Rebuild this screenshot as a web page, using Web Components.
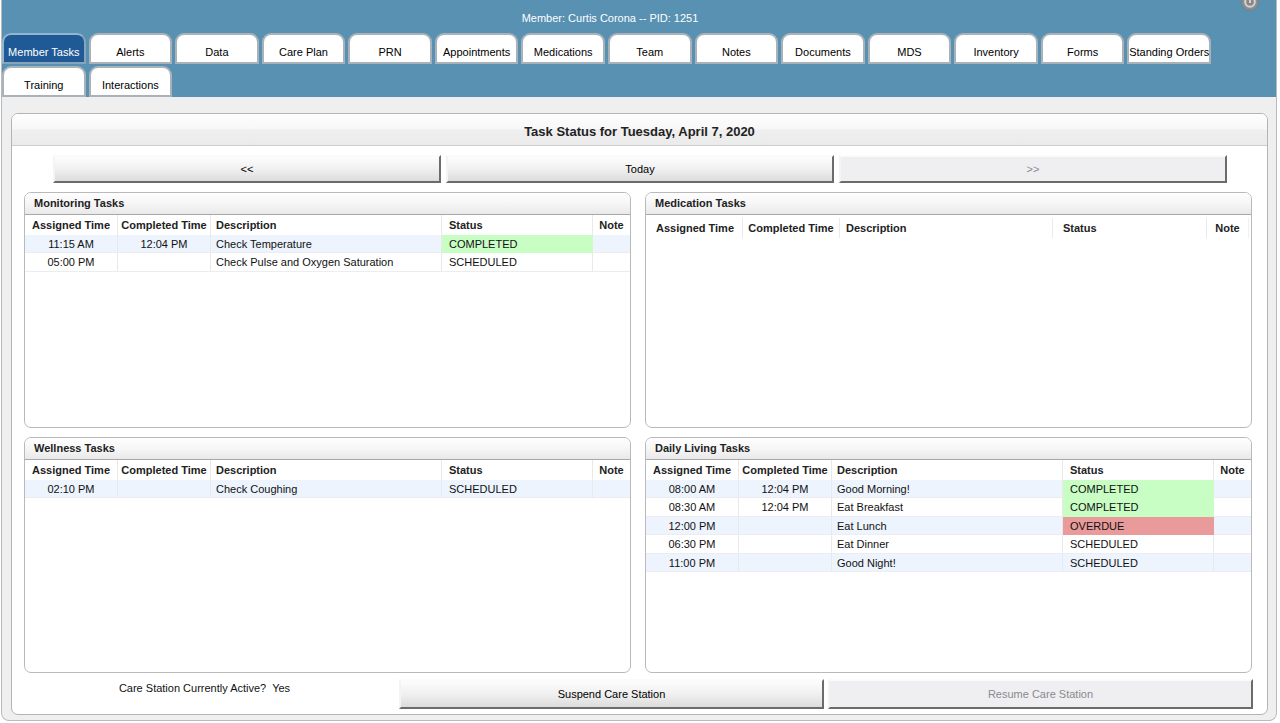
<!DOCTYPE html>
<html lang="en">
<head>
<meta charset="utf-8">
<title>Member Tasks</title>
<style>
  html { background: #fff; }
  body { margin: 0; font: 11px/14px "Liberation Sans", Arial, sans-serif; color: #111; }
</style>
</head>
<body>
<care-page></care-page>

<script>
const define = (name, html, setup) => {
  const template = document.createElement('template');
  template.innerHTML = html;
  customElements.define(name, class extends HTMLElement {
    connectedCallback() {
      if (this.shadowRoot) return;
      const root = this.attachShadow({ mode: 'open' });
      root.append(template.content.cloneNode(true));
      if (setup) setup(this, root);
    }
  });
};

/* A navigation tab */
define('nav-tab', `
  <style>
    :host { display: block; min-width: 0; }
    a { display: flex; box-sizing: border-box; height: 31px; padding-top: 6px; align-items: center; justify-content: center;
        white-space: nowrap; color: #000; background: #fff; text-decoration: none;
        border: 2px solid #a9b2b8; border-radius: 9px 9px 0 0; }
    :host([selected]) a { background: #1f5a96; color: #fff; border-color: #92b6cd #86a5ba #86a5ba #92b6cd; }
  </style>
  <a href="#"><slot></slot></a>
`, (el, root) => {
  if (el.hasAttribute('selected')) root.querySelector('a').setAttribute('aria-current', 'page');
});

/* Raised push button */
define('push-button', `
  <style>
    :host { display: block; min-width: 0; }
    button { display: block; box-sizing: border-box; width: 100%; height: var(--button-height, 28px); margin: 0; padding: 0;
        font: inherit; color: #000; border: 2px solid; border-color: #fbfbfb #6b6b6b #6b6b6b #f4f4f4;
        background: linear-gradient(#fdfdfd, #f0f0f0 50%, #dcdcdc); }
    button:disabled { color: #8a8a8d; background: #efeff2; border-color: #fbfbfb #6b6b6b #6b6b6b #f4f4f4; }
  </style>
  <button type="button"><slot></slot></button>
`, (el, root) => {
  root.querySelector('button').disabled = el.hasAttribute('disabled');
});

/* Panel with a heading and a task table; rows come from the "rows" attribute */
define('task-panel', `
  <style>
    :host { display: flex; flex-direction: column; box-sizing: border-box; min-width: 0;
        border: 1px solid #b9b9b9; border-radius: 7px; overflow: hidden; background: #fff; }
    h2 { margin: 0; padding: 3px 9px; font-size: 11px; line-height: 15px; height: 15px; color: #222;
        background: linear-gradient(#fefefe, #f6f6f6 50%, #e9e9e9); border-bottom: 1px solid #a8a8a8; }
    table { width: 100%; table-layout: fixed; border-collapse: separate; border-spacing: 0; }
    .time { width: 93px; } .status { width: 151px; } .note { width: 37px; }
    th, td { box-sizing: border-box; padding: 0; line-height: 14px; white-space: nowrap; text-align: center; border-right: 1px solid #e9e9ec; }
    th { height: 20px; color: #222; }
    td { height: 18px; border-bottom: 1px solid #ebedf0; }
    tr:nth-child(even) td { height: 19px; }
    tr:nth-child(odd) td { background: #edf4fd; }
    th:last-child, td:last-child { border-right: 0; }
    th:nth-child(3), td:nth-child(3) { text-align: left; padding-left: 5px; }
    th:nth-child(4), td:nth-child(4) { text-align: left; padding-left: 7px; }
    tbody tr td.completed { background: #c8fdc4; border-color: #c8fdc4; }
    tbody tr td.overdue { background: #e99a9a; border-color: #e99a9a; }
    .body.empty { padding: 3px 2px 0; }
    .empty .t1 { width: 95px; } .empty .t2 { width: 97px; } .empty .status { width: 154px; } .empty .note { width: 42px; }
    .empty th:nth-child(3) { padding-left: 6px; }
    .empty th:nth-child(4) { padding-left: 10px; }
    .empty th:last-child { border-right: 1px solid #f0f0f2; }
  </style>
  <h2></h2>
  <div class="body">
    <table>
      <colgroup><col class="time t1"><col class="time t2"><col><col class="status"><col class="note"></colgroup>
      <thead><tr><th scope="col">Assigned Time</th><th scope="col">Completed Time</th><th scope="col">Description</th><th scope="col">Status</th><th scope="col">Note</th></tr></thead>
      <tbody></tbody>
    </table>
  </div>
`, (el, root) => {
  const heading = el.getAttribute('heading');
  root.querySelector('h2').textContent = heading;
  root.querySelector('table').setAttribute('aria-label', heading);
  const rows = JSON.parse(el.getAttribute('rows') || '[]');
  if (!rows.length) root.querySelector('.body').classList.add('empty');
  for (const row of rows) {
    const tr = root.querySelector('tbody').insertRow();
    for (const text of [...row, '']) tr.insertCell().textContent = text;
    tr.cells[3].className = row[3].toLowerCase();
  }
});

define('member-header', `
  <style>
    :host { display: block; position: relative; background: #5891b2; padding-top: 11px; }
    .member { height: 14px; padding-right: 58px; text-align: center; color: #fff; }
    nav { display: grid; grid-template-columns: repeat(14, minmax(0, 1fr)); gap: 2px 3px; padding: 8px 65px 0 0; }
    button { position: absolute; top: -7px; right: 16px; width: 20px; height: 20px; padding: 0; border: 0; background: none; }
    svg { display: block; }
  </style>
  <div class="member">Member: Curtis Corona -- PID: 1251</div>
  <button type="button" aria-label="Power">
    <svg width="20" height="20" viewBox="0 0 20 20"><circle cx="10" cy="9" r="8.5" fill="#8b8e91" stroke="#75828b"/><circle cx="10" cy="9" r="4.8" fill="#8b8686" stroke="#d4d2d2" stroke-width="2"/><path d="M10 5v5" stroke="#d4d2d2" stroke-width="2"/></svg>
  </button>
  <nav aria-label="Member sections">
    <nav-tab selected>Member Tasks</nav-tab><nav-tab>Alerts</nav-tab><nav-tab>Data</nav-tab><nav-tab>Care Plan</nav-tab><nav-tab>PRN</nav-tab><nav-tab>Appointments</nav-tab><nav-tab>Medications</nav-tab><nav-tab>Team</nav-tab><nav-tab>Notes</nav-tab><nav-tab>Documents</nav-tab><nav-tab>MDS</nav-tab><nav-tab>Inventory</nav-tab><nav-tab>Forms</nav-tab><nav-tab>Standing Orders</nav-tab><nav-tab>Training</nav-tab><nav-tab>Interactions</nav-tab>
  </nav>
`);

define('task-status', `
  <style>
    :host { display: block; border: 1px solid #b4b4b4; border-radius: 7px; overflow: hidden; background: #fff; }
    h1 { margin: 0; padding: 10px 0 6px; font-size: 13px; line-height: 15px; height: 15px; text-align: center; color: #222;
        background: linear-gradient(#fefefe, #f7f7f7 48%, #efefef 52%, #ebebeb); border-bottom: 1px solid #ccc; }
    .days { display: grid; grid-template-columns: repeat(3, minmax(0, 1fr)); gap: 5px; padding: 9px 40px 9px 41px; }
    .panels { display: grid; grid-template-columns: repeat(2, minmax(0, 1fr)); grid-auto-rows: minmax(236px, auto); gap: 9px 14px; padding: 0 15px 0 12px; }
    .station { display: grid; grid-template-columns: 371fr 425fr 425fr; gap: 4px; padding: 6px 14px 5px 12px; --button-height: 30px; }
    .station p { margin: 0; padding: 2px 10px 0 0; text-align: center; white-space: pre; }
  </style>
  <h1>Task Status for Tuesday, April 7, 2020</h1>
  <div class="days"><push-button>&lt;&lt;</push-button><push-button>Today</push-button><push-button disabled>&gt;&gt;</push-button></div>
  <div class="panels">
    <task-panel heading="Monitoring Tasks" rows='[["11:15 AM","12:04 PM","Check Temperature","COMPLETED"],["05:00 PM","","Check Pulse and Oxygen Saturation","SCHEDULED"]]'></task-panel>
    <task-panel heading="Medication Tasks"></task-panel>
    <task-panel heading="Wellness Tasks" rows='[["02:10 PM","","Check Coughing","SCHEDULED"]]'></task-panel>
    <task-panel heading="Daily Living Tasks" rows='[["08:00 AM","12:04 PM","Good Morning!","COMPLETED"],["08:30 AM","12:04 PM","Eat Breakfast","COMPLETED"],["12:00 PM","","Eat Lunch","OVERDUE"],["06:30 PM","","Eat Dinner","SCHEDULED"],["11:00 PM","","Good Night!","SCHEDULED"]]'></task-panel>
  </div>
  <div class="station"><p>Care Station Currently Active?  Yes</p><push-button>Suspend Care Station</push-button><push-button disabled>Resume Care Station</push-button></div>
`);

define('care-page', `
  <style>
    :host { display: block; margin: 0 3px 2px 1px; border: 1px solid #b8bcc0; border-top: 0; border-radius: 0 0 8px 8px; overflow: hidden; background: #efeff0; }
    main { padding: 16px 8px 5px 9px; }
  </style>
  <member-header></member-header>
  <main><task-status></task-status></main>
`);
</script>
</body>
</html>
